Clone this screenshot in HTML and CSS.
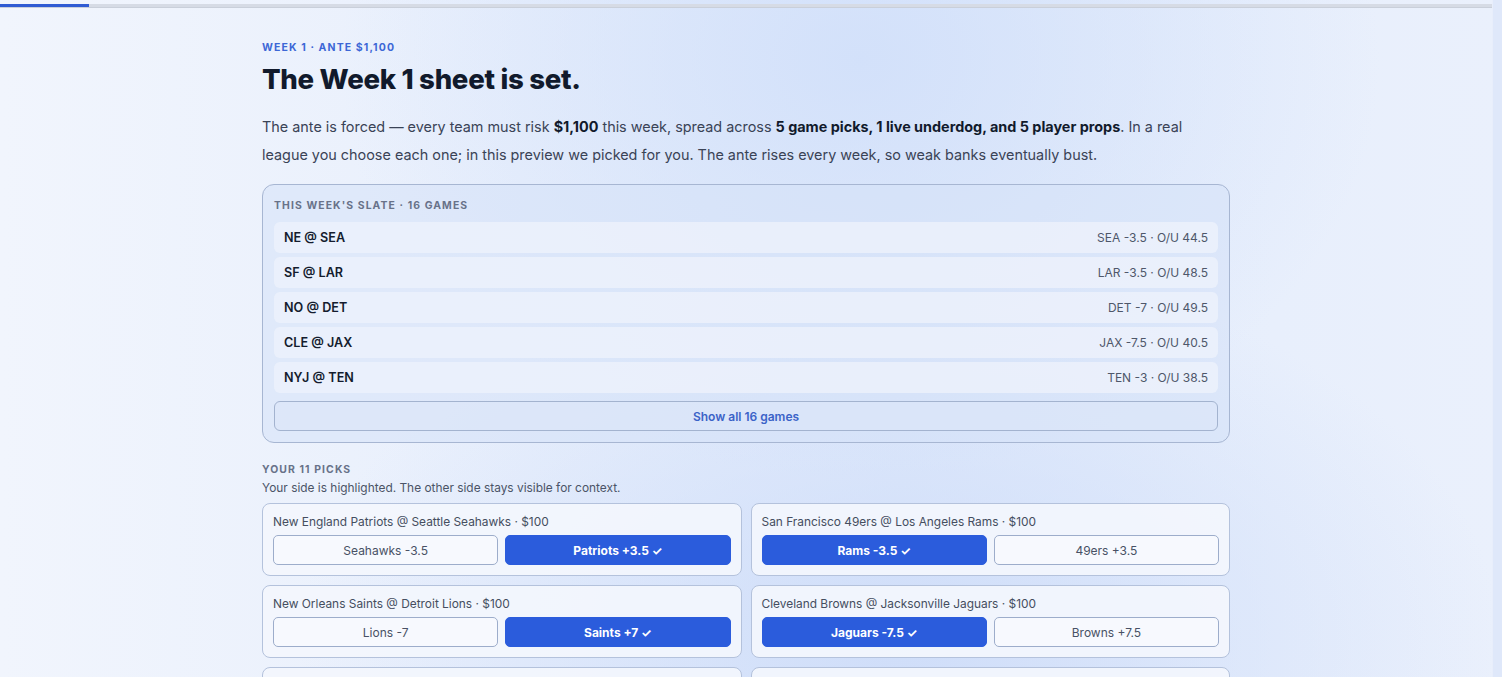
FILE: index.html
```html
<!DOCTYPE html>
<html lang="en">
<head>
<meta charset="utf-8">
<title>Week 1</title>
<link rel="stylesheet" href="styles.css">
</head>
<body>
<div class="viewport">
  <div class="page">
    <div class="progress"><div class="progress-fill"></div></div>
    <main class="content">
      <div class="eyebrow">WEEK 1 · ANTE $1,100</div>
      <h1 class="title">The Week 1 sheet is set.</h1>
      <p class="lead">The ante is forced — every team must risk <b>$1,100</b> this week, spread across <b>5 game picks, 1 live underdog, and 5 player props</b>. In a real league you choose each one; in this preview we picked for you. The ante rises every week, so weak banks eventually bust.</p>

      <section class="slate">
        <div class="label">THIS WEEK'S SLATE · 16 GAMES</div>
        <div class="games">
          <div class="game"><span class="matchup">NE @ SEA</span><span class="line">SEA -3.5 · O/U 44.5</span></div>
          <div class="game"><span class="matchup">SF @ LAR</span><span class="line">LAR -3.5 · O/U 48.5</span></div>
          <div class="game"><span class="matchup">NO @ DET</span><span class="line">DET -7 · O/U 49.5</span></div>
          <div class="game"><span class="matchup">CLE @ JAX</span><span class="line">JAX -7.5 · O/U 40.5</span></div>
          <div class="game"><span class="matchup">NYJ @ TEN</span><span class="line">TEN -3 · O/U 38.5</span></div>
        </div>
        <button class="show-all">Show all 16 games</button>
      </section>

      <section class="picks">
        <div class="label picks-label">YOUR 11 PICKS</div>
        <div class="sub">Your side is highlighted. The other side stays visible for context.</div>
        <div class="pick-grid">
          <div class="pick">
            <div class="pick-title">New England Patriots @ Seattle Seahawks · $100</div>
            <div class="sides"><div class="side">Seahawks -3.5</div><div class="side on">Patriots +3.5 ✓</div></div>
          </div>
          <div class="pick">
            <div class="pick-title">San Francisco 49ers @ Los Angeles Rams · $100</div>
            <div class="sides"><div class="side on">Rams -3.5 ✓</div><div class="side">49ers +3.5</div></div>
          </div>
          <div class="pick">
            <div class="pick-title">New Orleans Saints @ Detroit Lions · $100</div>
            <div class="sides"><div class="side">Lions -7</div><div class="side on">Saints +7 ✓</div></div>
          </div>
          <div class="pick">
            <div class="pick-title">Cleveland Browns @ Jacksonville Jaguars · $100</div>
            <div class="sides"><div class="side on">Jaguars -7.5 ✓</div><div class="side">Browns +7.5</div></div>
          </div>
          <div class="pick">
            <div class="pick-title">New York Jets @ Tennessee Titans · $100</div>
            <div class="sides"><div class="side">Titans -3</div><div class="side on">Jets +3 ✓</div></div>
          </div>
          <div class="pick">
            <div class="pick-title">Live underdog · $100</div>
            <div class="sides"><div class="side on">Jets ML ✓</div><div class="side">Titans ML</div></div>
          </div>
        </div>
      </section>
    </main>
  </div>
  <div class="track"></div>
</div>
</body>
</html>
```

FILE: styles.css
```css
* { box-sizing: border-box; }
html, body { margin: 0; padding: 0; }
body {
  font-family: Inter, "Noto Sans", "Liberation Sans", sans-serif;
  color: #0f1a2e;
  overflow: hidden;
  height: 677px;
}
.viewport {
  display: flex;
  height: 677px;
  background:
    radial-gradient(ellipse 520px 420px at 860px 60px, rgba(208,223,250,0.85), rgba(208,223,250,0) 100%),
    radial-gradient(ellipse 600px 380px at 900px 640px, rgba(205,220,249,0.9), rgba(205,220,249,0) 100%),
    linear-gradient(90deg, #f1f5fd 0%, #e8effc 35%, #e2ebfb 60%, #e8effc 85%, #eaf0fc 100%);
}
.page { flex: 1; min-width: 0; }
.track { width: 10px; background: #dfe8fa; border-left: 1px solid #e8eefb; }
.progress {
  margin-top: 4px;
  height: 4px;
  background: #d6dbe5;
  border-bottom: 1px solid #c9cfda;
}
.progress-fill { width: 89px; height: 3px; background: #2f5bd3; }
.content { width: 968px; margin: 0 auto; padding-top: 31px; }
.eyebrow {
  font-size: 10.5px; font-weight: 700; letter-spacing: 1.1px;
  color: #3d67d6; line-height: 18px;
}
.title {
  margin: 4px 0 0; font-size: 27.6px; font-weight: 800; letter-spacing: -0.3px;
  line-height: 36px; color: #111a2c;
}
.lead {
  margin: 16px 0 0; font-size: 14.4px; line-height: 28px; color: #3a4356;
}
.lead b { color: #111a2c; font-weight: 700; }
.slate {
  margin-top: 15px;
  border: 1px solid #a7b6d2;
  border-radius: 12px;
  background: rgba(214,226,247,0.55);
  padding: 13px 11px 11px;
}
.label {
  font-size: 10.4px; font-weight: 700; letter-spacing: 1.1px; color: #687289; line-height: 16px;
}
.games { margin-top: 8px; display: flex; flex-direction: column; gap: 4px; }
.game {
  height: 31px; display: flex; align-items: center; justify-content: space-between;
  padding: 0 10px; border-radius: 6px; background: rgba(236,241,252,0.85);
}
.matchup { font-size: 12.6px; font-weight: 600; color: #141c2e; }
.line { font-size: 12px; color: #4e576a; }
.show-all {
  display: block; width: 100%; margin-top: 8px; height: 30px;
  border: 1px solid #a3b3cf; border-radius: 6px; background: rgba(220,230,249,0.6);
  font-family: inherit; font-size: 12px; font-weight: 600; color: #3b63c8;
}
.picks { margin-top: 19px; }
.picks-label { line-height: 16px; }
.sub { font-size: 11.9px; color: #4b5467; line-height: 18px; margin-top: 1px; }
.pick-grid {
  margin-top: 6px; display: grid; grid-template-columns: 1fr 1fr; gap: 9px;
}
.pick {
  border: 1px solid #b4c2dc; border-radius: 8px; background: rgba(243,246,253,0.92);
  padding: 9px 10px 10px;
}
.pick-title { font-size: 11.9px; color: #454e60; line-height: 18px; }
.sides { margin-top: 4px; display: grid; grid-template-columns: 1fr 1fr; gap: 7px; }
.side {
  height: 30px; display: flex; align-items: center; justify-content: center;
  border: 1px solid #9dadcb; border-radius: 5px; background: #f7f9fe;
  font-size: 12px; color: #485165;
}
.side.on { background: #2b5cdc; border-color: #2b5cdc; color: #fff; font-weight: 700; }
```
